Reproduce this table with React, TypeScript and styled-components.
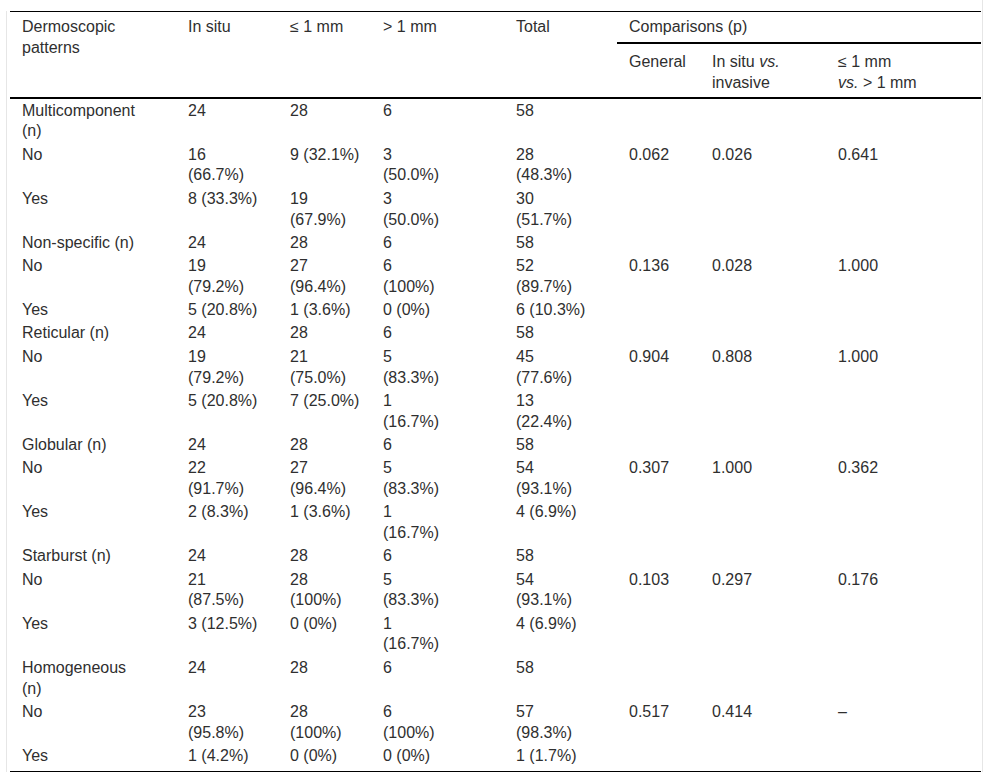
import React from "react";
import styled, { createGlobalStyle } from "styled-components";

const Global = createGlobalStyle`
  html, body { margin: 0; padding: 0; background: #ffffff; }
  body { font-family: "Liberation Sans", Arial, sans-serif; color: #2f2f2f; }
`;

const Frame = styled.div`
  margin-left: 6px;
  width: 976px;
  border-right: 1px solid #e6e6e6;
  padding-top: 11px;
`;

const Inner = styled.div`
  border-left: 1px solid #e6e6e6;
  padding-left: 3px;
`;

const Table = styled.table`
  width: 971px;
  table-layout: fixed;
  border-collapse: collapse;
  font-size: 16px;
  line-height: 20.8px;
  border-top: 1px solid #000;
  border-bottom: 1px solid #000;
`;

const Col = styled.col<{ $w: number }>`
  width: ${(p) => p.$w}px;
`;

const Head = styled.thead`
  border-bottom: 2px solid #000;
`;

const HeadCell = styled.th<{ $pr: number; $rule?: boolean; $sub?: boolean }>`
  text-align: left;
  vertical-align: top;
  font-weight: normal;
  padding: ${(p) => (p.$sub ? "8px" : "5.4px")} ${(p) => p.$pr}px
    ${(p) => (p.$sub ? "3.4px" : "4px")} 12px;
  border-bottom: ${(p) => (p.$rule ? "2px solid #000" : "none")};
`;

const Cell = styled.td<{ $pr: number; $last?: boolean }>`
  text-align: left;
  vertical-align: top;
  padding: 1.4px ${(p) => p.$pr}px ${(p) => (p.$last ? "4.5px" : "1.1px")} 12px;
`;

const Em = styled.i`
  font-style: italic;
`;

const Keep = styled.span`
  white-space: nowrap;
`;

const cols = [
  { w: 166, pr: 34 },
  { w: 102, pr: 16 },
  { w: 93, pr: 9 },
  { w: 133, pr: 61 },
  { w: 113, pr: 27 },
  { w: 83, pr: 4 },
  { w: 126, pr: 30 },
  { w: 155, pr: 43 },
];

type Row = string[];

const groups: { name: string; no: Row; yes: Row; p: Row }[] = [
  {
    name: "Multicomponent (n)",
    no: ["16 (66.7%)", "9 (32.1%)", "3 (50.0%)", "28 (48.3%)"],
    yes: ["8 (33.3%)", "19 (67.9%)", "3 (50.0%)", "30 (51.7%)"],
    p: ["0.062", "0.026", "0.641"],
  },
  {
    name: "Non-specific (n)",
    no: ["19 (79.2%)", "27 (96.4%)", "6 (100%)", "52 (89.7%)"],
    yes: ["5 (20.8%)", "1 (3.6%)", "0 (0%)", "6 (10.3%)"],
    p: ["0.136", "0.028", "1.000"],
  },
  {
    name: "Reticular (n)",
    no: ["19 (79.2%)", "21 (75.0%)", "5 (83.3%)", "45 (77.6%)"],
    yes: ["5 (20.8%)", "7 (25.0%)", "1 (16.7%)", "13 (22.4%)"],
    p: ["0.904", "0.808", "1.000"],
  },
  {
    name: "Globular (n)",
    no: ["22 (91.7%)", "27 (96.4%)", "5 (83.3%)", "54 (93.1%)"],
    yes: ["2 (8.3%)", "1 (3.6%)", "1 (16.7%)", "4 (6.9%)"],
    p: ["0.307", "1.000", "0.362"],
  },
  {
    name: "Starburst (n)",
    no: ["21 (87.5%)", "28 (100%)", "5 (83.3%)", "54 (93.1%)"],
    yes: ["3 (12.5%)", "0 (0%)", "1 (16.7%)", "4 (6.9%)"],
    p: ["0.103", "0.297", "0.176"],
  },
  {
    name: "Homogeneous (n)",
    no: ["23 (95.8%)", "28 (100%)", "6 (100%)", "57 (98.3%)"],
    yes: ["1 (4.2%)", "0 (0%)", "0 (0%)", "1 (1.7%)"],
    p: ["0.517", "0.414", "–"],
  },
];

const rows: Row[] = groups.flatMap((g) => [
  [g.name, "24", "28", "6", "58", "", "", ""],
  ["No", ...g.no, ...g.p],
  ["Yes", ...g.yes, "", "", ""],
]);

export default function App() {
  return (
    <>
      <Global />
      <Frame>
        <Inner>
          <Table>
            <colgroup>
              {cols.map((c, i) => (
                <Col key={i} $w={c.w} />
              ))}
            </colgroup>
            <Head>
              <tr>
                <HeadCell rowSpan={2} $pr={cols[0].pr}>Dermoscopic patterns</HeadCell>
                <HeadCell rowSpan={2} $pr={cols[1].pr}>In situ</HeadCell>
                <HeadCell rowSpan={2} $pr={cols[2].pr}>≤ 1 mm</HeadCell>
                <HeadCell rowSpan={2} $pr={cols[3].pr}>&gt; 1 mm</HeadCell>
                <HeadCell rowSpan={2} $pr={cols[4].pr}>Total</HeadCell>
                <HeadCell colSpan={3} $pr={4} $rule>Comparisons (p)</HeadCell>
              </tr>
              <tr>
                <HeadCell $sub $pr={cols[5].pr}>General</HeadCell>
                <HeadCell $sub $pr={cols[6].pr}>
                  In situ <Em>vs.</Em> invasive
                </HeadCell>
                <HeadCell $sub $pr={cols[7].pr}>
                  <Keep>≤ 1 mm</Keep> <Keep><Em>vs.</Em> &gt; 1 mm</Keep>
                </HeadCell>
              </tr>
            </Head>
            <tbody>
              {rows.map((r, i) => (
                <tr key={i}>
                  {r.map((v, j) => (
                    <Cell key={j} $pr={cols[j].pr} $last={i === rows.length - 1}>
                      {v}
                    </Cell>
                  ))}
                </tr>
              ))}
            </tbody>
          </Table>
        </Inner>
      </Frame>
    </>
  );
}
